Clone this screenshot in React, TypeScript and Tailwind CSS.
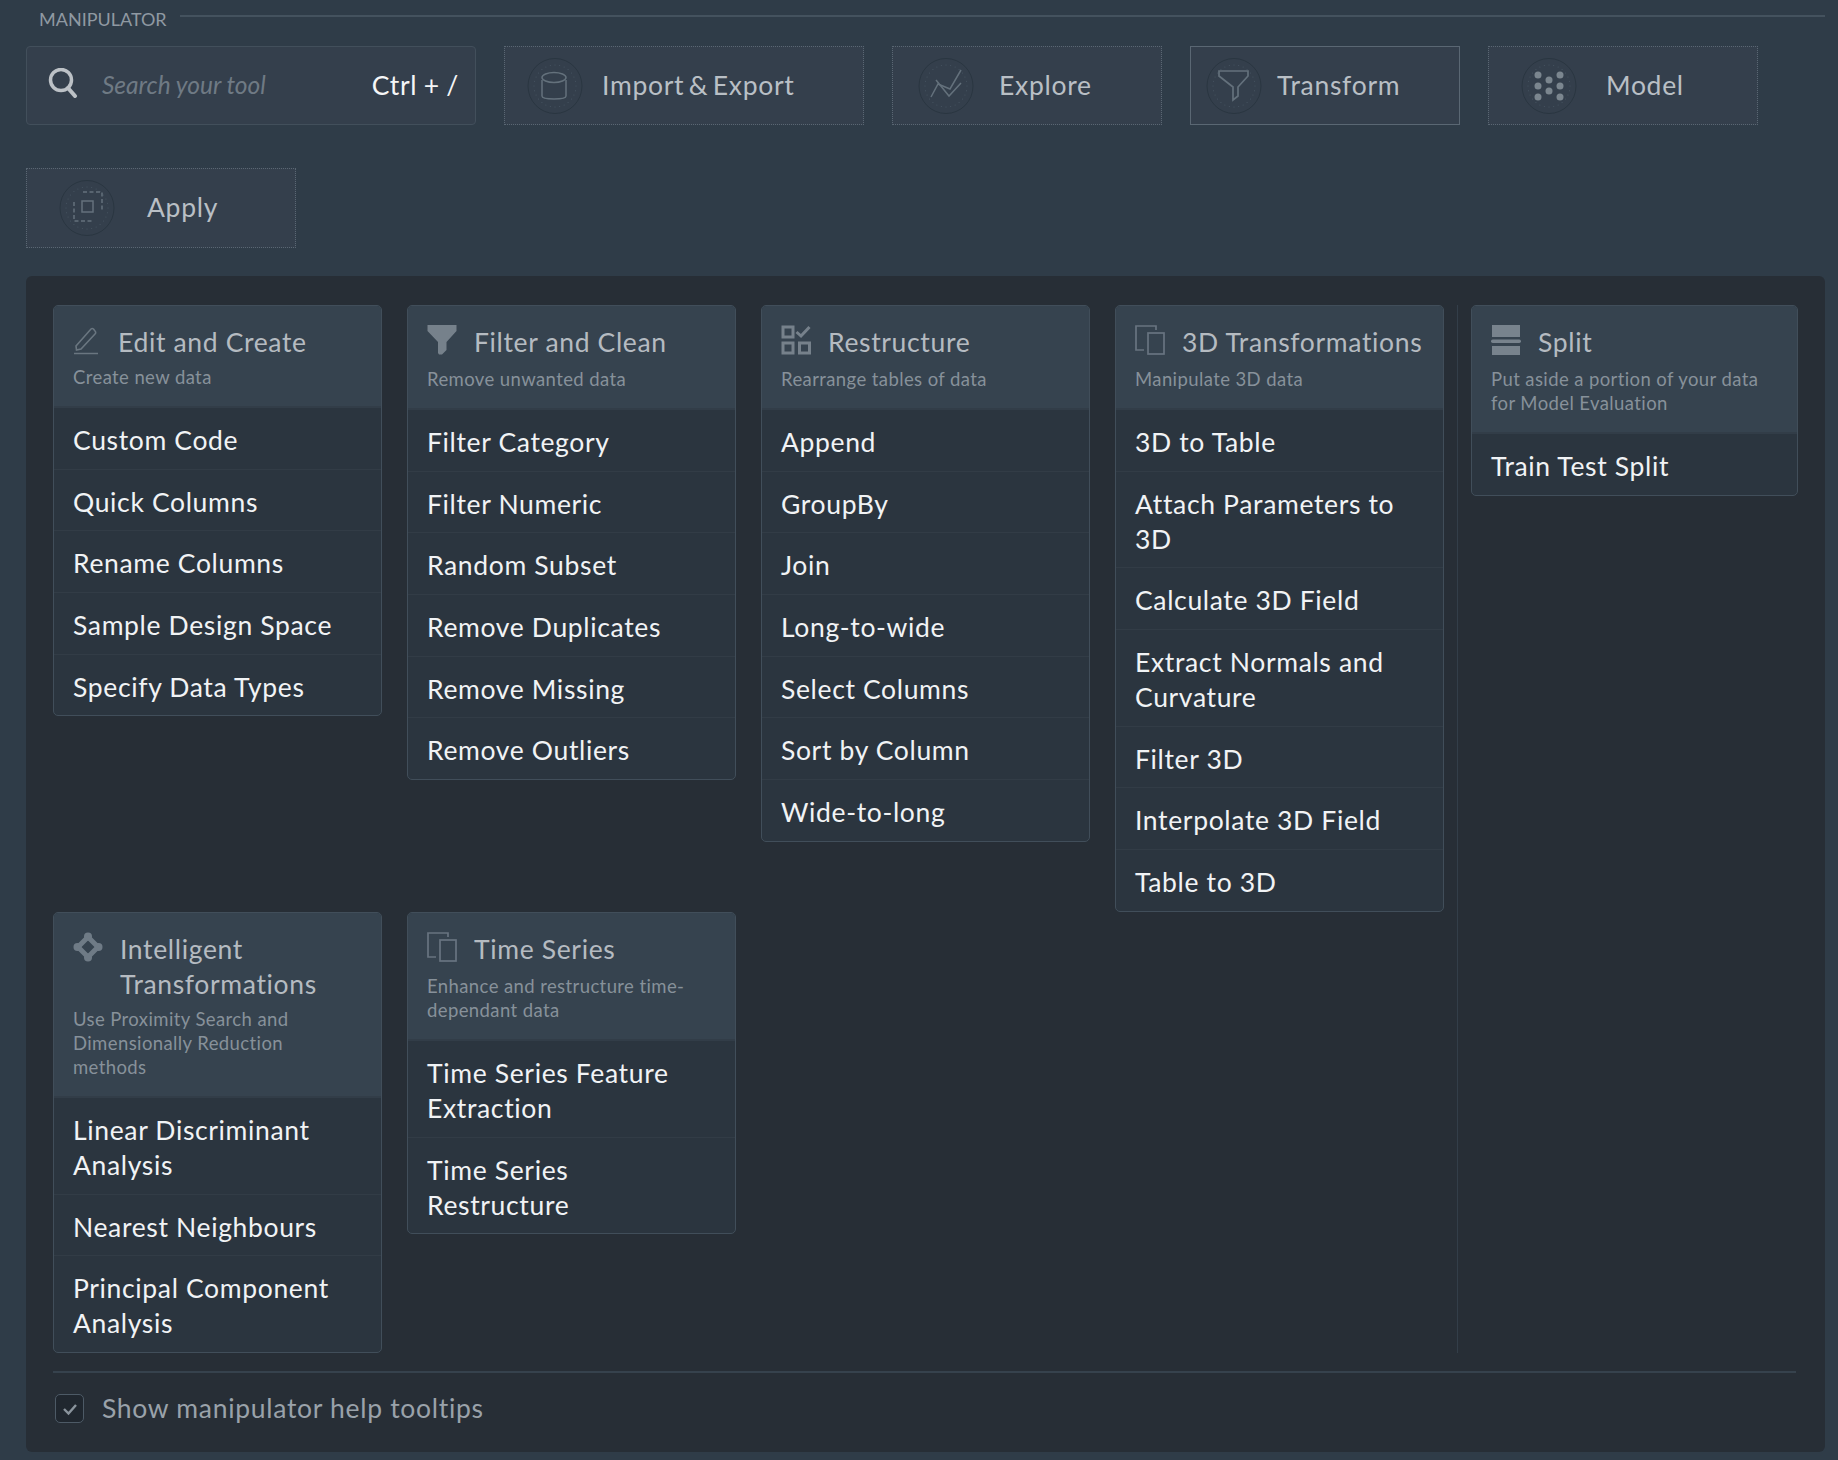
import type { ReactNode } from "react";

const font = { fontFamily: "Lato, 'Open Sans', sans-serif" };

// dotted ring shown inside the round toolbar icons
function ToolIcon({ children }: { children: ReactNode }) {
  const dots = Array.from({ length: 28 }, (_, i) => (i * Math.PI * 2) / 28);
  return (
    <svg width="56" height="56" viewBox="0 0 56 56" fill="none" className="shrink-0">
      <ellipse cx="28" cy="28" rx="27" ry="27.5" stroke="#2a3641" strokeWidth="1" />
      {dots.map((a) => (
        <circle key={a} cx={28 + Math.cos(a) * 21} cy={28 + Math.sin(a) * 21} r="0.5" fill="#4b5966" />
      ))}
      {children}
    </svg>
  );
}

function ToolButton({ label, icon, width, pad, gap, height = "h-[79px]", active }: { label: string; icon: ReactNode; width: string; pad: string; gap: string; height?: string; active?: boolean }) {
  return (
    <div
      className={`flex items-center bg-[#343f4c] text-[26.5px] tracking-[0.7px] [word-spacing:-3px] text-[#b9bfc5] ${height} ${width} ${pad} ${gap} ${
        active ? "border border-[#5a6773]" : "border border-dotted border-[#5a6773]"
      }`}
    >
      <ToolIcon>{icon}</ToolIcon>
      <span>{label}</span>
    </div>
  );
}

const line = { stroke: "#64717c", strokeWidth: 1.5, fill: "none" };

const CardIcons: Record<string, ReactNode> = {
  edit: (
    <svg width="26" height="30" viewBox="0 0 26 30" fill="none">
      <path d="M3 21 L3.5 25 L8 24 L22 9 A2 2 0 0 0 22 6 L20.5 4 A2 2 0 0 0 18 4 Z" stroke="#6a7680" strokeWidth="1.6" />
      <path d="M1 28.5 H25" stroke="#6a7680" strokeWidth="1.6" />
    </svg>
  ),
  filter: (
    <svg width="30" height="30" viewBox="0 0 30 30">
      <path d="M0.5 0 H29.5 V6 L19.5 17 V25 L15 29.5 H12 L11 28 V17 L0.5 6 Z" fill="#76818b" />
    </svg>
  ),
  restructure: (
    <svg width="30" height="30" viewBox="0 0 30 30" fill="none" stroke="#76818b" strokeWidth="3">
      <rect x="2" y="2" width="10" height="10" />
      <rect x="2" y="18" width="10" height="10" />
      <rect x="18.5" y="18" width="10" height="10" />
      <path d="M15.5 7 L20 11 L28.5 2" />
    </svg>
  ),
  frames: (
    <svg width="30" height="30" viewBox="0 0 30 30" fill="none" stroke="#687480" strokeWidth="1.7">
      <path d="M21 5 V1 H1 V25 H9" />
      <rect x="13" y="8" width="16" height="21" />
    </svg>
  ),
  split: (
    <svg width="30" height="30" viewBox="0 0 30 30" fill="#78838d">
      <rect x="1" y="0" width="28" height="12" />
      <rect x="0" y="14.5" width="30" height="3.5" rx="1.7" />
      <rect x="1" y="21" width="28" height="9" />
    </svg>
  ),
  nodes: (
    <svg width="30" height="30" viewBox="0 0 30 30" fill="none">
      <path d="M15 5 L25 15 L15 25 L5 15 Z" stroke="#6f7b86" strokeWidth="5" strokeLinejoin="round" />
      <circle cx="15" cy="4.5" r="4" fill="#6f7b86" />
      <circle cx="15" cy="25.5" r="4" fill="#6f7b86" />
      <circle cx="4.5" cy="15" r="4" fill="#6f7b86" />
      <circle cx="25.5" cy="15" r="4" fill="#6f7b86" />
    </svg>
  ),
};

function Card({ icon, iconW, title, sub, subGap, items, width = "w-[329px]" }: { icon: string; iconW: string; title: string[]; sub: string[]; subGap: string; items: string[][]; width?: string }) {
  return (
    <div className={`overflow-hidden rounded-[5px] border border-[#414e5a] bg-[#2b353f] ${width}`}>
      <div className="border-b-2 border-[#323d48] bg-[#36434f] px-[19px] pb-[17px] pt-[19px]">
        <div className="flex items-start">
          <div className={`flex shrink-0 ${iconW}`}>{CardIcons[icon]}</div>
          <div className="whitespace-nowrap text-[26.5px] leading-[35px] tracking-[0.65px] text-[#b5bbc1]">
            {title.map((t) => (
              <div key={t}>{t}</div>
            ))}
          </div>
        </div>
        <div className={`text-[18.5px] leading-[24px] tracking-[0.4px] text-[#87919a] ${subGap}`}>
          {sub.map((t) => (
            <div key={t}>{t}</div>
          ))}
        </div>
      </div>
      {items.map((lines, i) => (
        <div
          key={lines[0]}
          className={`px-[19px] pb-[10.7px] pt-[15px] text-[26.5px] leading-[35px] tracking-[0.65px] text-[#f1f3f5] ${i < items.length - 1 ? "border-b border-[#323c46]" : ""}`}
        >
          {lines.map((t) => (
            <div key={t}>{t}</div>
          ))}
        </div>
      ))}
    </div>
  );
}

export default function App() {
  return (
    <div className="min-h-screen w-full bg-[#2f3c48] pb-[7px] pl-[26px] pr-[13px] pt-[8px]" style={font}>
      <div className="flex h-[22px] items-center pl-[13px]">
        <span className="text-[18px] text-[#8f99a2]">MANIPULATOR</span>
        <div className="ml-[13px] mt-[-7px] h-[2px] flex-1 bg-[#44525e]" />
      </div>

      <div className="mt-[16px] flex flex-wrap gap-x-[28px] gap-y-[43px]">
        <div className="flex h-[79px] w-[450px] items-center rounded-[4px] border border-[#424f5b] bg-[#343f4c] pl-[21px] pr-[16px]">
          <svg width="30" height="30" viewBox="0 0 30 30" fill="none" className="mt-[-6px] shrink-0">
            <circle cx="13" cy="12" r="10.5" stroke="#bcc1c6" strokeWidth="3.5" />
            <path d="M20 20 L27 28" stroke="#bcc1c6" strokeWidth="4" strokeLinecap="round" />
          </svg>
          <span className="ml-[24px] flex-1 text-[24.5px] italic text-[#6f7a84]">Search your tool</span>
          <span className="text-[26.5px] tracking-[0.7px] [word-spacing:-1px] text-[#f5f6f7]">Ctrl + /</span>
        </div>

        <ToolButton
          label="Import & Export"
          width="w-[360px]"
          pad="pl-[22px]"
          gap="gap-[19px]"
          icon={
            <g {...line}>
              <ellipse cx="27" cy="19.5" rx="12" ry="5" />
              <path d="M15 22 V38 C15 42 39 42 39 38 V22" />
            </g>
          }
        />
        <ToolButton
          label="Explore"
          width="w-[270px]"
          pad="pl-[25px]"
          gap="gap-[25px]"
          icon={
            <g {...line}>
              <path d="M13 39 L20 26 L32 31 L43 12" />
              <path d="M18 22 L31 38 L43 25" />
            </g>
          }
        />
        <ToolButton
          label="Transform"
          width="w-[270px]"
          pad="pl-[15px]"
          gap="gap-[15px]"
          active
          icon={
            <path d="M13 13 H42 V18 L32 29 V38 L27 42 V29 L13 18 Z" fill="none" stroke="#64717c" strokeWidth="1.7" />
          }
        />
        <ToolButton
          label="Model"
          width="w-[270px]"
          pad="pl-[32px]"
          gap="gap-[29px]"
          icon={
            <g fill="#7b868f">
              <circle cx="17" cy="17" r="3.5" />
              <circle cx="17" cy="28" r="3.5" />
              <circle cx="17" cy="39" r="3.5" />
              <circle cx="28" cy="22" r="3.5" />
              <circle cx="28" cy="33" r="3.5" />
              <circle cx="39" cy="17" r="3.5" />
              <circle cx="39" cy="28" r="3.5" />
              <circle cx="39" cy="39" r="3.5" />
            </g>
          }
        />
        <ToolButton
          label="Apply"
          width="w-[270px]"
          height="h-[80px]"
          pad="pl-[32px]"
          gap="gap-[32px]"
          icon={
            <g {...line}>
              <rect x="23" y="21" width="11" height="11" />
              <path d="M24 12 H43 V30" strokeDasharray="4 2.5" />
              <path d="M15 22 V41 H34" strokeDasharray="4 2.5" />
            </g>
          }
        />
      </div>

      <div className="mt-[28px] rounded-[6px] bg-[#272e36] pb-[23px] pl-[27px] pr-[29px] pt-[29px]">
        <div className="flex items-stretch">
          <div className="flex w-[1405px] shrink-0 flex-wrap content-start items-start gap-x-[25px] border-r border-[#333e49] pr-[13px]">
            <Card
              icon="edit"
              iconW="w-[45px]"
              title={["Edit and Create"]}
              sub={["Create new data"]}
              subGap="mt-[5px]"
              items={[["Custom Code"], ["Quick Columns"], ["Rename Columns"], ["Sample Design Space"], ["Specify Data Types"]]}
            />
            <Card
              icon="filter"
              iconW="w-[47px]"
              title={["Filter and Clean"]}
              sub={["Remove unwanted data"]}
              subGap="mt-[7px]"
              items={[["Filter Category"], ["Filter Numeric"], ["Random Subset"], ["Remove Duplicates"], ["Remove Missing"], ["Remove Outliers"]]}
            />
            <Card
              icon="restructure"
              iconW="w-[47px]"
              title={["Restructure"]}
              sub={["Rearrange tables of data"]}
              subGap="mt-[7px]"
              items={[["Append"], ["GroupBy"], ["Join"], ["Long-to-wide"], ["Select Columns"], ["Sort by Column"], ["Wide-to-long"]]}
            />
            <Card
              icon="frames"
              iconW="w-[47px]"
              title={["3D Transformations"]}
              sub={["Manipulate 3D data"]}
              subGap="mt-[7px]"
              items={[
                ["3D to Table"],
                ["Attach Parameters to", "3D"],
                ["Calculate 3D Field"],
                ["Extract Normals and", "Curvature"],
                ["Filter 3D"],
                ["Interpolate 3D Field"],
                ["Table to 3D"],
              ]}
            />
            <Card
              icon="nodes"
              iconW="w-[47px]"
              title={["Intelligent", "Transformations"]}
              sub={["Use Proximity Search and", "Dimensionally Reduction", "methods"]}
              subGap="mt-[5px]"
              items={[["Linear Discriminant", "Analysis"], ["Nearest Neighbours"], ["Principal Component", "Analysis"]]}
            />
            <Card
              icon="frames"
              iconW="w-[47px]"
              title={["Time Series"]}
              sub={["Enhance and restructure time-", "dependant data"]}
              subGap="mt-[7px]"
              items={[["Time Series Feature", "Extraction"], ["Time Series", "Restructure"]]}
            />
          </div>
          <div className="pl-[13px]">
            <Card
              icon="split"
              iconW="w-[47px]"
              width="w-[327px]"
              title={["Split"]}
              sub={["Put aside a portion of your data", "for Model Evaluation"]}
              subGap="mt-[7px]"
              items={[["Train Test Split"]]}
            />
          </div>
        </div>

        <div className="mt-[18px] h-[2px] bg-[#36424d]" />

        <div className="ml-[2px] mt-[16px] flex items-center gap-[18px] text-[26.5px] tracking-[0.7px] text-[#9aa2aa]">
          <div className="flex h-[29px] w-[29px] items-center justify-center rounded-[5px] border border-[#4d5a66] bg-[#20272f]">
            <svg width="16" height="14" viewBox="0 0 16 14" fill="none">
              <path d="M2 7 L6.5 11.5 L14 3" stroke="#8a949d" strokeWidth="2.4" />
            </svg>
          </div>
          <span>Show manipulator help tooltips</span>
        </div>
      </div>
    </div>
  );
}
